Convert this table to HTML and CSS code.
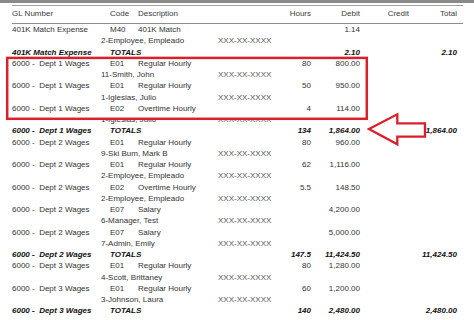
FILE: index.html
```html
<!DOCTYPE html>
<html lang="en">
<head>
    <meta charset="UTF-8">
    <meta name="viewport" content="width=device-width, initial-scale=1.0">
    <title>Payroll Journal</title>
    <link rel="stylesheet" href="styles.css">
</head>
<body>
    <div class="topbar"></div>
    <div class="report">
        <div class="row header">
            <div class="gl">GL Number</div>
            <div class="code">Code</div>
            <div class="desc">Description</div>
            <div class="hours">Hours</div>
            <div class="debit">Debit</div>
            <div class="credit">Credit</div>
            <div class="total">Total</div>
        </div>

        <div class="row">
            <div class="gl">401K Match Expense</div>
            <div class="code">M40</div>
            <div class="desc">401K Match</div>
            <div class="debit">1.14</div>
        </div>
        <div class="row">
            <div class="name">2-Employee, Empleado</div>
            <div class="ssn">XXX-XX-XXXX</div>
        </div>
        <div class="row totals">
            <div class="gl">401K Match Expense</div>
            <div class="code">TOTALS</div>
            <div class="debit">2.10</div>
            <div class="total">2.10</div>
        </div>

        <div class="row">
            <div class="gl">6000 -  Dept 1 Wages</div>
            <div class="code">E01</div>
            <div class="desc">Regular Hourly</div>
            <div class="hours">80</div>
            <div class="debit">800.00</div>
        </div>
        <div class="row">
            <div class="name">11-Smith, John</div>
            <div class="ssn">XXX-XX-XXXX</div>
        </div>
        <div class="row">
            <div class="gl">6000 -  Dept 1 Wages</div>
            <div class="code">E01</div>
            <div class="desc">Regular Hourly</div>
            <div class="hours">50</div>
            <div class="debit">950.00</div>
        </div>
        <div class="row">
            <div class="name">1-Iglesias, Julio</div>
            <div class="ssn">XXX-XX-XXXX</div>
        </div>
        <div class="row">
            <div class="gl">6000 -  Dept 1 Wages</div>
            <div class="code">E02</div>
            <div class="desc">Overtime Hourly</div>
            <div class="hours">4</div>
            <div class="debit">114.00</div>
        </div>
        <div class="row">
            <div class="name">1-Iglesias, Julio</div>
            <div class="ssn">XXX-XX-XXXX</div>
        </div>
        <div class="row totals">
            <div class="gl">6000 -  Dept 1 Wages</div>
            <div class="code">TOTALS</div>
            <div class="hours">134</div>
            <div class="debit">1,864.00</div>
            <div class="total">1,864.00</div>
        </div>

        <div class="row">
            <div class="gl">6000 -  Dept 2 Wages</div>
            <div class="code">E01</div>
            <div class="desc">Regular Hourly</div>
            <div class="hours">80</div>
            <div class="debit">960.00</div>
        </div>
        <div class="row">
            <div class="name">9-Ski Bum, Mark B</div>
            <div class="ssn">XXX-XX-XXXX</div>
        </div>
        <div class="row">
            <div class="gl">6000 -  Dept 2 Wages</div>
            <div class="code">E01</div>
            <div class="desc">Regular Hourly</div>
            <div class="hours">62</div>
            <div class="debit">1,116.00</div>
        </div>
        <div class="row">
            <div class="name">2-Employee, Empleado</div>
            <div class="ssn">XXX-XX-XXXX</div>
        </div>
        <div class="row">
            <div class="gl">6000 -  Dept 2 Wages</div>
            <div class="code">E02</div>
            <div class="desc">Overtime Hourly</div>
            <div class="hours">5.5</div>
            <div class="debit">148.50</div>
        </div>
        <div class="row">
            <div class="name">2-Employee, Empleado</div>
            <div class="ssn">XXX-XX-XXXX</div>
        </div>
        <div class="row">
            <div class="gl">6000 -  Dept 2 Wages</div>
            <div class="code">E07</div>
            <div class="desc">Salary</div>
            <div class="debit">4,200.00</div>
        </div>
        <div class="row">
            <div class="name">6-Manager, Test</div>
            <div class="ssn">XXX-XX-XXXX</div>
        </div>
        <div class="row">
            <div class="gl">6000 -  Dept 2 Wages</div>
            <div class="code">E07</div>
            <div class="desc">Salary</div>
            <div class="debit">5,000.00</div>
        </div>
        <div class="row">
            <div class="name">7-Admin, Emily</div>
            <div class="ssn">XXX-XX-XXXX</div>
        </div>
        <div class="row totals">
            <div class="gl">6000 -  Dept 2 Wages</div>
            <div class="code">TOTALS</div>
            <div class="hours">147.5</div>
            <div class="debit">11,424.50</div>
            <div class="total">11,424.50</div>
        </div>

        <div class="row">
            <div class="gl">6000 -  Dept 3 Wages</div>
            <div class="code">E01</div>
            <div class="desc">Regular Hourly</div>
            <div class="hours">80</div>
            <div class="debit">1,280.00</div>
        </div>
        <div class="row">
            <div class="name">4-Scott, Brittaney</div>
            <div class="ssn">XXX-XX-XXXX</div>
        </div>
        <div class="row">
            <div class="gl">6000 -  Dept 3 Wages</div>
            <div class="code">E01</div>
            <div class="desc">Regular Hourly</div>
            <div class="hours">60</div>
            <div class="debit">1,200.00</div>
        </div>
        <div class="row">
            <div class="name">3-Johnson, Laura</div>
            <div class="ssn">XXX-XX-XXXX</div>
        </div>
        <div class="row totals">
            <div class="gl">6000 -  Dept 3 Wages</div>
            <div class="code">TOTALS</div>
            <div class="hours">140</div>
            <div class="debit">2,480.00</div>
            <div class="total">2,480.00</div>
        </div>

        <div class="row">
            <div class="gl">Employer Paid Taxes</div>
            <div class="code">EA1</div>
            <div class="desc">Employer Paid T     5155</div>
            <div class="credit">15.11</div>
        </div>
    </div>

    <svg class="marks" width="474" height="320" viewBox="0 0 474 320">
        <rect x="7" y="114.5" width="360" height="3.5" fill="#ffffff"/>
        <rect x="7.2" y="57.9" width="359.6" height="60.9" fill="none" stroke="#d9212c" stroke-width="2.5"/>
        <polygon points="369,129 397.3,114.3 397.3,123.3 425,123.3 425,136.7 397.3,136.7 397.3,144.3"
                 fill="none" stroke="#d9212c" stroke-width="2.3" stroke-linejoin="miter"/>
    </svg>
</body>
</html>
```

FILE: styles.css
```css
html, body {
    height: 320px;
    overflow: hidden;
}

body {
    margin: 0;
    padding: 0;
    position: relative;
    background: #ffffff;
    font-family: "Liberation Sans", Arial, sans-serif;
    font-size: 8px;
    color: #333333;
}

.topbar {
    height: 3px;
    background: #8a8a8a;
}

.report {
    margin: 2px 11px 0 12px;
    border-top: 1px solid #a0a0a0;
}

.row {
    display: grid;
    grid-template-columns: 89px 9px 28px 80px 54px 39px 49px 49px 48px;
    height: 11.25px;
    line-height: 11.25px;
    white-space: pre;
}

.header {
    height: 11px;
    line-height: 11px;
    padding: 2px 0 4px;
    border-bottom: 1px solid #8c8c8c;
    color: #3a3a3a;
}

.gl {
    grid-column: 1 / 3;
}

.name {
    grid-column: 2 / 5;
}

.code {
    grid-column: 3;
}

.desc {
    grid-column: 4 / 6;
}

.ssn {
    grid-column: 5;
    color: #555555;
}

.hours, .debit, .credit, .total {
    text-align: right;
}

.hours {
    grid-column: 6;
}

.debit {
    grid-column: 7;
}

.credit {
    grid-column: 8;
}

.total {
    grid-column: 9;
}

.totals {
    font-weight: bold;
    font-style: italic;
    color: #111111;
}

.marks {
    position: absolute;
    top: 0;
    left: 0;
    pointer-events: none;
}
```
